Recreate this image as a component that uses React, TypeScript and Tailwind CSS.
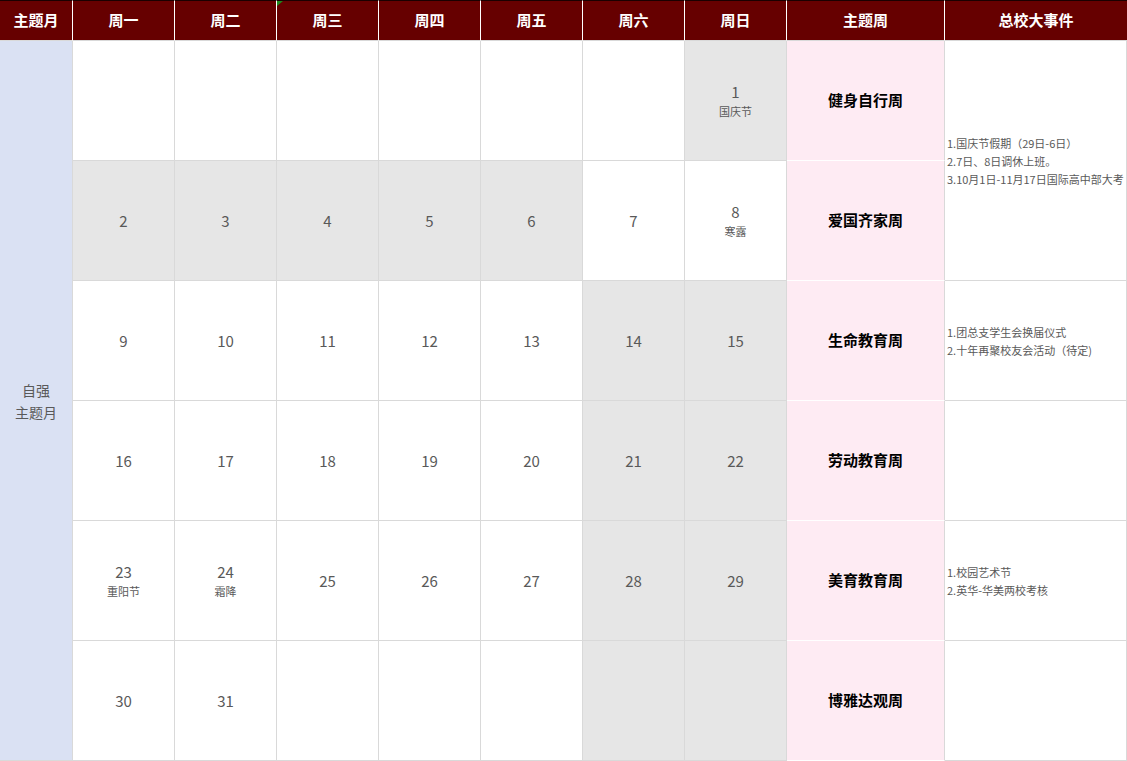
import React from "react";

type Day = { n: number; l?: string } | null;

const rows: Day[][] = [
  [null, null, null, null, null, null, { n: 1, l: "国庆节" }],
  [{ n: 2 }, { n: 3 }, { n: 4 }, { n: 5 }, { n: 6 }, { n: 7 }, { n: 8, l: "寒露" }],
  [{ n: 9 }, { n: 10 }, { n: 11 }, { n: 12 }, { n: 13 }, { n: 14 }, { n: 15 }],
  [{ n: 16 }, { n: 17 }, { n: 18 }, { n: 19 }, { n: 20 }, { n: 21 }, { n: 22 }],
  [{ n: 23, l: "重阳节" }, { n: 24, l: "霜降" }, { n: 25 }, { n: 26 }, { n: 27 }, { n: 28 }, { n: 29 }],
  [{ n: 30 }, { n: 31 }, null, null, null, null, null],
];

const gray: number[][] = [
  [0, 0, 0, 0, 0, 0, 1],
  [1, 1, 1, 1, 1, 0, 0],
  [0, 0, 0, 0, 0, 1, 1],
  [0, 0, 0, 0, 0, 1, 1],
  [0, 0, 0, 0, 0, 1, 1],
  [0, 0, 0, 0, 0, 1, 1],
];

const weeks = ["健身自行周", "爱国齐家周", "生命教育周", "劳动教育周", "美育教育周", "博雅达观周"];

// events by row index; span 2 for the first one, row 1 is covered
const events: { [k: number]: { lines: string[]; span?: boolean } } = {
  0: { lines: ["1.国庆节假期（29日-6日）", "2.7日、8日调休上班。", "3.10月1日-11月17日国际高中部大考"], span: true },
  2: { lines: ["1.团总支学生会换届仪式", "2.十年再聚校友会活动（待定)"] },
  3: { lines: [] },
  4: { lines: ["1.校园艺术节", "2.英华-华美两校考核"] },
  5: { lines: [] },
};

const heads = ["主题月", "周一", "周二", "周三", "周四", "周五", "周六", "周日", "主题周", "总校大事件"];

export default function App() {
  return (
    <div
      className="w-[1127px] h-[761px] overflow-hidden bg-white"
      style={{ fontFamily: '"Microsoft YaHei", "Noto Sans CJK SC", "Noto Sans", sans-serif' }}
    >
      <div className="grid grid-cols-[73px_repeat(7,102px)_158px_182px] grid-rows-[41px_repeat(6,120px)]">
        {heads.map((h, i) => (
          <div
            key={h}
            className={`relative flex items-center justify-center bg-[#660000] border-t border-t-[#1a0000] border-b border-b-[#d9d9d9] text-[15px] font-bold text-white ${
              i < heads.length - 1 ? "border-r border-r-white" : ""
            }`}
          >
            {h}
            {i === 3 && (
              <span className="absolute left-0 top-0 w-0 h-0 border-t-[5px] border-t-[#1e8a1e] border-r-[6px] border-r-transparent" />
            )}
          </div>
        ))}

        <div className="row-span-6 flex items-center justify-center bg-[#dae1f3] border-r border-b border-[#d9d9d9] text-[14px] leading-[22px] text-[#595959] text-center">
          <div>
            自强
            <br />
            主题月
          </div>
        </div>

        {rows.map((row, r) => (
          <React.Fragment key={r}>
            {row.map((d, c) => (
              <div
                key={c}
                className={`flex flex-col items-center justify-center border-r border-b border-[#d9d9d9] text-[#595959] ${
                  gray[r][c] ? "bg-[#e6e6e6]" : "bg-white"
                }`}
              >
                {d && (
                  <>
                    <span className="text-[15px] leading-[20px]">{d.n}</span>
                    {d.l && <span className="text-[11px] leading-[18px]">{d.l}</span>}
                  </>
                )}
              </div>
            ))}
            <div className="flex items-center justify-center bg-[#feebf3] border-r border-r-[#d9d9d9] border-b border-b-white text-[15px] font-bold text-black">
              {weeks[r]}
            </div>
            {events[r] && (
              <div
                className={`flex flex-col justify-center pl-[2px] border-r border-b border-[#d9d9d9] text-[11px] leading-[18px] text-[#595959] whitespace-nowrap overflow-hidden ${
                  events[r].span ? "row-span-2" : ""
                }`}
              >
                {events[r].lines.map((t) => (
                  <div key={t}>{t}</div>
                ))}
              </div>
            )}
          </React.Fragment>
        ))}
      </div>
    </div>
  );
}
